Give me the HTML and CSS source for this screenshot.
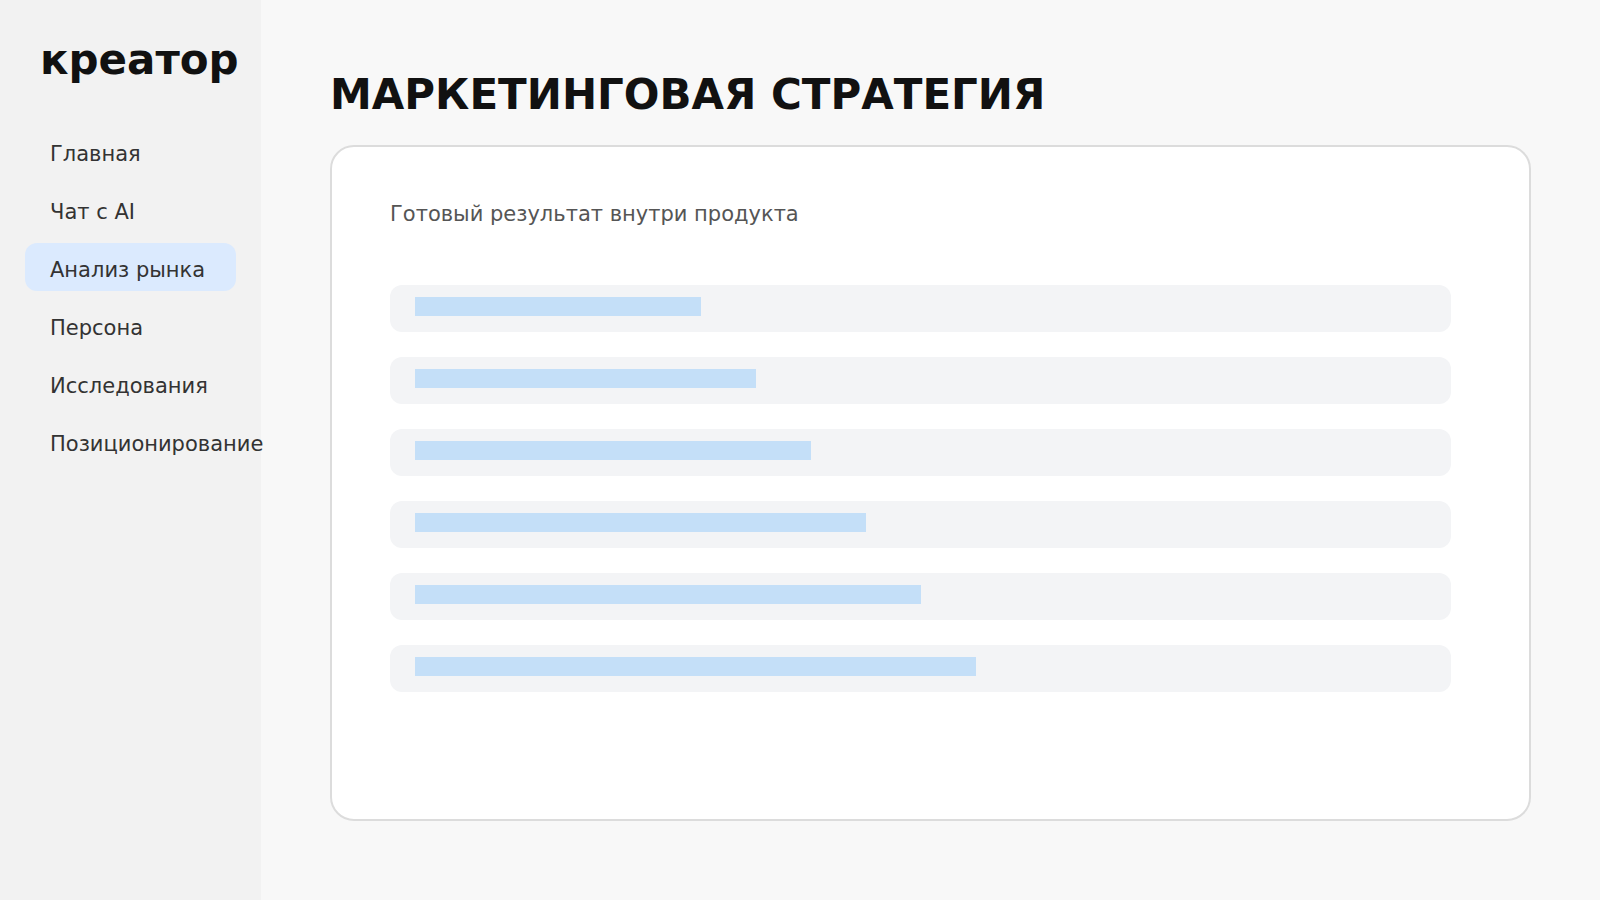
FILE: index.html
```html
<!DOCTYPE html>
<html lang="ru">
<head>
<meta charset="utf-8">
<title>креатор</title>
<link rel="stylesheet" href="styles.css">
</head>
<body>
<aside class="sidebar">
  <div class="logo">креатор</div>
  <nav class="nav">
    <div class="nav-item">Главная</div>
    <div class="nav-item">Чат с AI</div>
    <div class="nav-item active">Анализ рынка</div>
    <div class="nav-item">Персона</div>
    <div class="nav-item">Исследования</div>
    <div class="nav-item">Позиционирование</div>
  </nav>
</aside>
<main class="main">
  <h1 class="title">МАРКЕТИНГОВАЯ СТРАТЕГИЯ</h1>
  <section class="card">
    <p class="subtitle">Готовый результат внутри продукта</p>
    <div class="rows">
      <div class="row"><div class="bar" style="width:286px"></div></div>
      <div class="row"><div class="bar" style="width:341px"></div></div>
      <div class="row"><div class="bar" style="width:396px"></div></div>
      <div class="row"><div class="bar" style="width:451px"></div></div>
      <div class="row"><div class="bar" style="width:506px"></div></div>
      <div class="row"><div class="bar" style="width:561px"></div></div>
    </div>
  </section>
</main>
</body>
</html>
```
FILE: styles.css
```css
* { box-sizing: border-box; }
html, body { margin: 0; padding: 0; }
body {
  display: flex;
  height: 900px;
  font-family: "DejaVu Sans", sans-serif;
  background: #f8f8f8;
}
.sidebar {
  width: 261px;
  flex: 0 0 261px;
  background: #f2f2f2;
  padding: 34px 25px 0 25px;
}
.logo {
  font-size: 42px;
  font-weight: bold;
  line-height: 52px;
  color: #111;
  padding-left: 15px;
}
.nav {
  display: flex;
  flex-direction: column;
  gap: 10px;
  margin-top: 41px;
}
.nav-item {
  height: 48px;
  font-size: 21px;
  line-height: 24px;
  padding: 15px 24px 9px 25px;
  border-radius: 12px;
  color: #333;
  white-space: nowrap;
}
.nav-item.active {
  background: #dbeafe;
}
.main {
  flex: 1;
  padding: 69px 69px 0 69px;
}
.title {
  margin: 0;
  font-size: 42px;
  line-height: 52px;
  font-weight: bold;
  color: #111;
}
.card {
  margin-top: 24px;
  height: 676px;
  background: #fff;
  border: 2px solid #dcdcdc;
  border-radius: 24px;
  padding: 55px 58px;
}
.subtitle {
  margin: 0;
  font-size: 21px;
  line-height: 24px;
  color: #555;
}
.rows {
  margin-top: 59px;
  max-width: 1061px;
  display: flex;
  flex-direction: column;
  gap: 25px;
}
.row {
  height: 47px;
  background: #f3f4f6;
  border-radius: 12px;
  padding: 12px 25px 16px 25px;
}
.bar {
  height: 19px;
  background: #c4dff8;
}
```
